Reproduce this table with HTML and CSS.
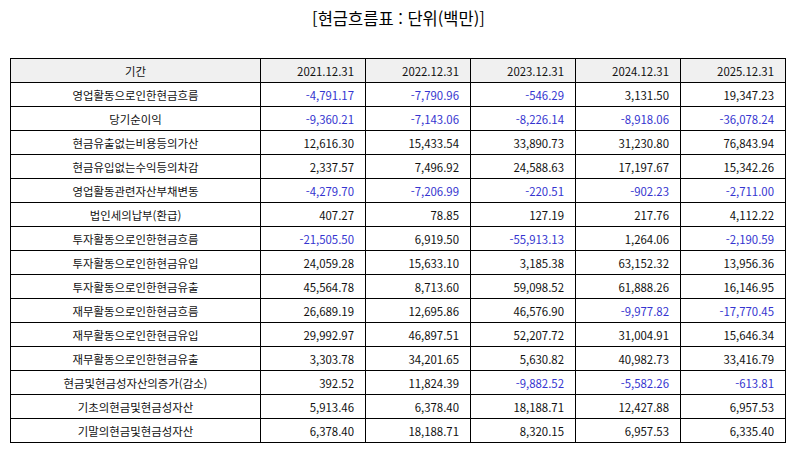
FILE: index.html
```html
<!DOCTYPE html>
<html lang="ko">
<head>
<meta charset="utf-8">
<title>현금흐름표</title>
<link rel="stylesheet" href="styles.css">
</head>
<body>
<div class="page">
  <h1 class="title">[현금흐름표 : 단위(백만)]</h1>
  <table class="cf">
    <colgroup>
      <col class="c-label"><col class="c-num"><col class="c-num"><col class="c-num"><col class="c-num"><col class="c-num">
    </colgroup>
    <thead>
      <tr><th class="label">기간</th><th>2021.12.31</th><th>2022.12.31</th><th>2023.12.31</th><th>2024.12.31</th><th>2025.12.31</th></tr>
    </thead>
    <tbody>
      <tr><td class="label">영업활동으로인한현금흐름</td><td class="neg">-4,791.17</td><td class="neg">-7,790.96</td><td class="neg">-546.29</td><td>3,131.50</td><td>19,347.23</td></tr>
      <tr><td class="label">당기순이익</td><td class="neg">-9,360.21</td><td class="neg">-7,143.06</td><td class="neg">-8,226.14</td><td class="neg">-8,918.06</td><td class="neg">-36,078.24</td></tr>
      <tr><td class="label">현금유출없는비용등의가산</td><td>12,616.30</td><td>15,433.54</td><td>33,890.73</td><td>31,230.80</td><td>76,843.94</td></tr>
      <tr><td class="label">현금유입없는수익등의차감</td><td>2,337.57</td><td>7,496.92</td><td>24,588.63</td><td>17,197.67</td><td>15,342.26</td></tr>
      <tr><td class="label">영업활동관련자산부채변동</td><td class="neg">-4,279.70</td><td class="neg">-7,206.99</td><td class="neg">-220.51</td><td class="neg">-902.23</td><td class="neg">-2,711.00</td></tr>
      <tr><td class="label">법인세의납부(환급)</td><td>407.27</td><td>78.85</td><td>127.19</td><td>217.76</td><td>4,112.22</td></tr>
      <tr><td class="label">투자활동으로인한현금흐름</td><td class="neg">-21,505.50</td><td>6,919.50</td><td class="neg">-55,913.13</td><td>1,264.06</td><td class="neg">-2,190.59</td></tr>
      <tr><td class="label">투자활동으로인한현금유입</td><td>24,059.28</td><td>15,633.10</td><td>3,185.38</td><td>63,152.32</td><td>13,956.36</td></tr>
      <tr><td class="label">투자활동으로인한현금유출</td><td>45,564.78</td><td>8,713.60</td><td>59,098.52</td><td>61,888.26</td><td>16,146.95</td></tr>
      <tr><td class="label">재무활동으로인한현금흐름</td><td>26,689.19</td><td>12,695.86</td><td>46,576.90</td><td class="neg">-9,977.82</td><td class="neg">-17,770.45</td></tr>
      <tr><td class="label">재무활동으로인한현금유입</td><td>29,992.97</td><td>46,897.51</td><td>52,207.72</td><td>31,004.91</td><td>15,646.34</td></tr>
      <tr><td class="label">재무활동으로인한현금유출</td><td>3,303.78</td><td>34,201.65</td><td>5,630.82</td><td>40,982.73</td><td>33,416.79</td></tr>
      <tr><td class="label">현금및현금성자산의증가(감소)</td><td>392.52</td><td>11,824.39</td><td class="neg">-9,882.52</td><td class="neg">-5,582.26</td><td class="neg">-613.81</td></tr>
      <tr><td class="label">기초의현금및현금성자산</td><td>5,913.46</td><td>6,378.40</td><td>18,188.71</td><td>12,427.88</td><td>6,957.53</td></tr>
      <tr><td class="label">기말의현금및현금성자산</td><td>6,378.40</td><td>18,188.71</td><td>8,320.15</td><td>6,957.53</td><td>6,335.40</td></tr>
    </tbody>
  </table>
</div>
</body>
</html>
```
FILE: styles.css
```css
html, body {
  margin: 0;
  padding: 0;
  background: #ffffff;
}
.page {
  padding: 0 9px 0 10px;
  font-family: "Noto Sans CJK KR", "Noto Sans", sans-serif;
  color: #000;
}
.title {
  margin: 0;
  height: 36px;
  line-height: 36px;
  font-size: 16.5px;
  font-weight: normal;
  text-align: center;
  color: #000;
  padding-left: 2px;
}
.cf {
  margin-top: 22px;
  width: 775px;
  border-collapse: collapse;
  table-layout: fixed;
  font-size: 11.4px;
}
.c-label { width: 250px; }
.c-num { width: 105px; }
.cf tr {
  height: 24px;
}
.cf th, .cf td {
  border: 1px solid #000;
  padding: 0 11px 0 6px;
  text-align: right;
  font-weight: normal;
  white-space: nowrap;
  line-height: 14px;
  color: #111;
}
.cf thead th {
  background: #f0f0f0;
}
.cf .label {
  text-align: center;
  padding: 0 6px;
}
.cf .neg {
  color: #3535d0;
}
```
